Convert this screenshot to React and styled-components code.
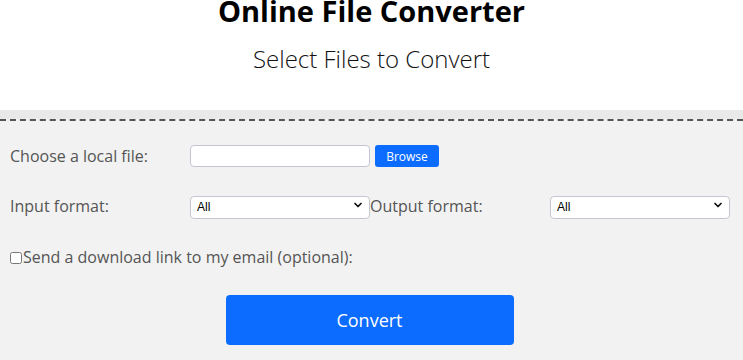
import React, { useState } from 'react'
import styled, { createGlobalStyle } from 'styled-components'
import { ChevronDown } from 'lucide-react'

const Global = createGlobalStyle`
body {
  margin: 0;
  background: #ffffff;
  font-family: "Open Sans", "Liberation Sans", sans-serif;
  overflow: hidden;
}
`
const Header = styled.header`
height: 110px;
display: flex;
flex-direction: column;
align-items: center;
`
const Title = styled.h1`
margin: -7px 0 0 0;
font-size: 29px;
line-height: 36px;
font-weight: 700;
color: #000;
`
const Subtitle = styled.h2`
margin: 14px 0 0 0;
font-size: 24px;
line-height: 32px;
font-weight: 300;
color: #111;
`
const Panel = styled.section`
background: #e9e9e9;
padding-top: 9px;
`
const Form = styled.form`
background: #f2f2f2;
border-top: 2px dashed #555;
padding: 24px 0 20px 10px;
display: flex;
flex-direction: column;
`
const Row = styled.div`
display: grid;
grid-template-columns: 180px 180px 180px 180px;
align-items: center;
height: ${p => p.h || 22}px;
margin-top: ${p => p.mt || 0}px;
`
const Label = styled.label`
font-size: 16px;
color: #555;
line-height: 20px;
`
const FileBox = styled.div`
grid-column: 2 / span 2;
display: flex;
gap: 5px;
`
const TextInput = styled.input`
box-sizing: border-box;
width: 180px;
height: 22px;
border: 1px solid #c4c7d1;
border-radius: 4px;
background: #fff;
`
const Browse = styled.button`
height: 22px;
width: 64px;
border: none;
border-radius: 3px;
background: #0b6cff;
color: #fff;
font-family: "Open Sans", sans-serif;
font-size: 12px;
padding: 0;
`
const SelectWrap = styled.div`
position: relative;
width: 180px;
height: 23px;
`
const Select = styled.select`
appearance: none;
box-sizing: border-box;
width: 100%;
height: 100%;
border: 1px solid #c4c7d1;
border-radius: 4px;
background: #fff;
font-family: "Liberation Sans", Arial, sans-serif;
font-size: 12px;
color: #000;
padding: 0 0 0 6px;
`
const Chevron = styled.span`
position: absolute;
right: 6px;
top: 5px;
pointer-events: none;
display: flex;
`
const CheckRow = styled.label`
display: flex;
align-items: center;
height: 22px;
margin-top: 29px;
font-size: 16px;
color: #555;
`
const Check = styled.input`
margin: 1px 1px 0 0;
width: 12px;
height: 12px;
`
const Convert = styled.button`
align-self: center;
margin: 27px 0 0 -14px;
width: 288px;
height: 50px;
border: none;
border-radius: 4px;
background: #0b6cff;
color: #fff;
font-family: "Open Sans", sans-serif;
font-size: 18px;
`

function FormatSelect({ value, onChange }) {
  return (
    <SelectWrap>
      <Select value={value} onChange={e => onChange(e.target.value)}>
        <option>All</option>
        <option>PDF</option>
        <option>DOCX</option>
        <option>JPG</option>
      </Select>
      <Chevron><ChevronDown size={12} strokeWidth={3.5} color="#111" /></Chevron>
    </SelectWrap>
  )
}

export default function App() {
  const [input, setInput] = useState('All')
  const [output, setOutput] = useState('All')

  return (
    <>
      <Global />
      <Header>
        <Title>Online File Converter</Title>
        <Subtitle>Select Files to Convert</Subtitle>
      </Header>
      <Panel>
        <Form onSubmit={e => e.preventDefault()}>
          <Row>
            <Label>Choose a local file:</Label>
            <FileBox>
              <TextInput type="text" />
              <Browse type="button">Browse</Browse>
            </FileBox>
          </Row>
          <Row h={23} mt={27}>
            <Label>Input format:</Label>
            <FormatSelect value={input} onChange={setInput} />
            <Label>Output format:</Label>
            <FormatSelect value={output} onChange={setOutput} />
          </Row>
          <CheckRow>
            <Check type="checkbox" />
            Send a download link to my email (optional):
          </CheckRow>
          <Convert type="submit">Convert</Convert>
        </Form>
      </Panel>
    </>
  )
}
